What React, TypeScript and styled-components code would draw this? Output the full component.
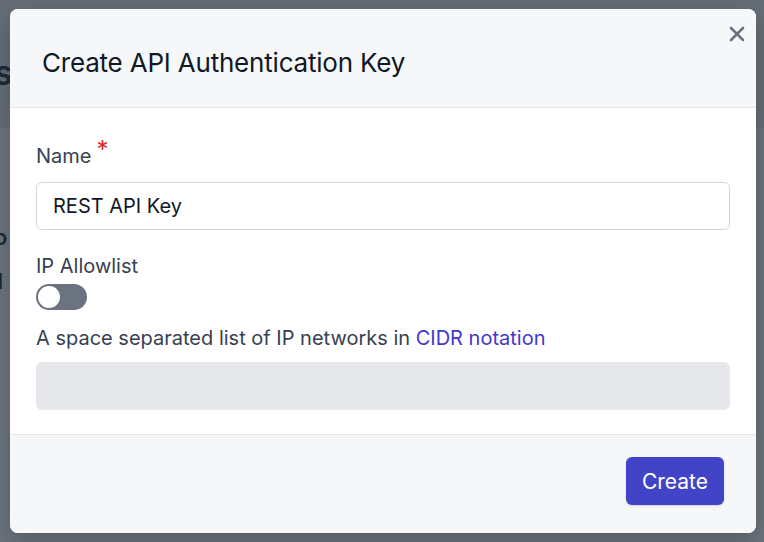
import React from "react";
import styled, { createGlobalStyle } from "styled-components";

const Global = createGlobalStyle`
  html, body { margin: 0; padding: 0; }
  body { font-family: Inter, "Liberation Sans", Arial, sans-serif; background: #6b737d; }
`;

const Page = styled.div`
  position: relative;
  width: 764px;
  height: 542px;
  overflow: hidden;
  background: #6b737d;
`;

const BackBand = styled.div`
  height: 128px;
  background: #646c76;
`;

const BackGlyph = styled.span<{ $top: number; $size: number }>`
  position: absolute;
  left: -6px;
  top: ${(p) => p.$top}px;
  font-size: ${(p) => p.$size}px;
  color: #1f2937;
  font-weight: 600;
`;

const Modal = styled.div`
  position: absolute;
  left: 10px;
  top: 9px;
  width: 746px;
  height: 524px;
  background: #fff;
  border-radius: 8px;
  overflow: hidden;
  display: flex;
  flex-direction: column;
  box-shadow: 0 10px 25px rgba(0,0,0,0.2);
`;

const Header = styled.div`
  height: 98px;
  background: #f6f7f9;
  border-bottom: 1px solid #e5e7eb;
  display: flex;
  align-items: center;
  padding-left: 32px;
  position: relative;
  flex-shrink: 0;
`;

const Title = styled.h2`
  margin: 8px 0 0;
  font-size: 26px;
  font-weight: 400;
  color: #111827;
  letter-spacing: -0.2px;
`;

const Close = styled.button`
  position: absolute;
  right: 10px;
  top: 16px;
  border: 0;
  background: none;
  padding: 0;
  width: 18px;
  height: 18px;
  cursor: pointer;
`;

const Body = styled.div`
  flex: 1;
  padding: 36px 26px 0;
  display: flex;
  flex-direction: column;
`;

const Label = styled.label`
  font-size: 20px;
  color: #374151;
  display: block;
`;

const Req = styled.span`
  color: #dc2626;
  position: relative;
  top: -5px;
  margin-left: 5px;
  font-size: 24px;
  line-height: 0;
`;

const Input = styled.input<{ $disabled?: boolean }>`
  box-sizing: border-box;
  width: 694px;
  height: 48px;
  border: 1px solid ${(p) => (p.$disabled ? "#e5e7eb" : "#d1d5db")};
  border-radius: 6px;
  background: ${(p) => (p.$disabled ? "#e6e7ea" : "#fff")};
  padding: 0 16px;
  font: inherit;
  font-size: 20px;
  color: #111827;
  outline: none;
`;

const Toggle = styled.div`
  width: 51px;
  height: 26px;
  border-radius: 13px;
  background: #6b7280;
  position: relative;
  margin-top: 6px;
  &::after {
    content: "";
    position: absolute;
    left: 2px;
    top: 2px;
    width: 22px;
    height: 22px;
    border-radius: 50%;
    background: #fff;
  }
`;

const Help = styled.p`
  margin: 16px 0 12px;
  font-size: 20px;
  color: #374151;
  a { color: #4338ca; text-decoration: none; }
`;

const Footer = styled.div`
  height: 99px;
  background: #f6f7f9;
  border-top: 1px solid #e5e7eb;
  display: flex;
  align-items: center;
  justify-content: flex-end;
  padding-right: 32px;
  padding-bottom: 6px;
  box-sizing: border-box;
  flex-shrink: 0;
`;

const Button = styled.button`
  width: 98px;
  height: 48px;
  border: 0;
  border-radius: 6px;
  background: #4244c7;
  color: #fff;
  font: inherit;
  font-size: 21px;
  box-shadow: 0 1px 2px rgba(0,0,0,0.15);
`;

export default function App() {
  return (
    <Page>
      <Global />
      <BackBand />
      <BackGlyph $top={52} $size={34}>s</BackGlyph>
      <BackGlyph $top={224} $size={22}>o</BackGlyph>
      <BackGlyph $top={268} $size={22}>1</BackGlyph>
      <Modal>
        <Header>
          <Title>Create API Authentication Key</Title>
          <Close aria-label="close">
            <svg width="18" height="18" viewBox="0 0 18 18">
              <path d="M3 3 L15 15 M15 3 L3 15" stroke="#6b7280" strokeWidth="2.6" strokeLinecap="round" />
            </svg>
          </Close>
        </Header>
        <Body>
          <Label>Name<Req>*</Req></Label>
          <div style={{ height: 14 }} />
          <Input defaultValue="REST API Key" />
          <div style={{ height: 24 }} />
          <Label>IP Allowlist</Label>
          <Toggle />
          <Help>A space separated list of IP networks in <a href="#">CIDR notation</a></Help>
          <Input $disabled disabled />
        </Body>
        <Footer>
          <Button>Create</Button>
        </Footer>
      </Modal>
    </Page>
  );
}
